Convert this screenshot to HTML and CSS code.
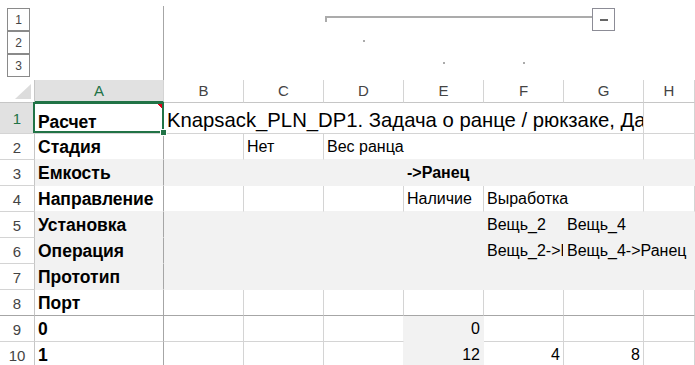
FILE: index.html
```html
<!DOCTYPE html>
<html lang="ru">
<head>
  <meta charset="UTF-8" />
  <title>Knapsack_PLN_DP1</title>
  <link rel="stylesheet" href="styles.css">
</head>
<body>

  <!-- уровни группировки столбцов -->
  <div class="outline">
    <div class="levels">
      <span class="lvl">1</span>
      <span class="lvl">2</span>
      <span class="lvl">3</span>
    </div>
    <div class="col-a-line"></div>
    <div class="group">
      <div class="group-bar"></div>
      <div class="collapse"></div>
    </div>
    <i class="dot dot-d"></i>
    <i class="dot dot-e"></i>
    <i class="dot dot-f"></i>
  </div>

  <div class="sheet">
    <!-- заголовки столбцов -->
    <div class="c corner"></div>
    <div class="c ch sel-col">A</div>
    <div class="c ch">B</div>
    <div class="c ch">C</div>
    <div class="c ch">D</div>
    <div class="c ch">E</div>
    <div class="c ch">F</div>
    <div class="c ch">G</div>
    <div class="c ch">H</div>

    <!-- 1 -->
    <div class="c rh sel-row">1</div>
    <div class="c r1 b a active">Расчет</div>
    <div class="c r1 title s6">Knapsack_PLN_DP1. Задача о ранце / рюкзаке, Данные</div>
    <div class="c r1"></div>

    <!-- 2 -->
    <div class="c rh">2</div>
    <div class="c b a to-fill">Стадия</div>
    <div class="c to-fill"></div>
    <div class="c to-fill">Нет</div>
    <div class="c s4 to-fill">Вес ранца</div>
    <div class="c to-fill"></div>

    <!-- 3 -->
    <div class="c rh">3</div>
    <div class="c b fill a">Емкость</div>
    <div class="c fill s3"></div>
    <div class="c fill s4 b">-&gt;Ранец</div>

    <!-- 4 -->
    <div class="c rh">4</div>
    <div class="c b a to-fill">Направление</div>
    <div class="c to-fill"></div>
    <div class="c to-fill"></div>
    <div class="c to-fill"></div>
    <div class="c to-fill">Наличие</div>
    <div class="c s2 to-fill">Выработка</div>
    <div class="c to-fill"></div>

    <!-- 5 -->
    <div class="c rh">5</div>
    <div class="c b fill a">Установка</div>
    <div class="c fill s4"></div>
    <div class="c fill">Вещь_2</div>
    <div class="c fill s2">Вещь_4</div>

    <!-- 6 -->
    <div class="c rh">6</div>
    <div class="c b fill a">Операция</div>
    <div class="c fill s4"></div>
    <div class="c fill">Вещь_2-&gt;Ранец</div>
    <div class="c fill s2">Вещь_4-&gt;Ранец</div>

    <!-- 7 -->
    <div class="c rh">7</div>
    <div class="c b fill a">Прототип</div>
    <div class="c fill s7"></div>

    <!-- 8 -->
    <div class="c rh frz">8</div>
    <div class="c b a frz">Порт</div>
    <div class="c frz"></div>
    <div class="c frz"></div>
    <div class="c frz"></div>
    <div class="c frz"></div>
    <div class="c frz"></div>
    <div class="c frz"></div>
    <div class="c frz"></div>

    <!-- 9 -->
    <div class="c rh">9</div>
    <div class="c b a">0</div>
    <div class="c"></div>
    <div class="c"></div>
    <div class="c nb-r"></div>
    <div class="c fill num">0</div>
    <div class="c"></div>
    <div class="c"></div>
    <div class="c"></div>

    <!-- 10 -->
    <div class="c rh">10</div>
    <div class="c b a">1</div>
    <div class="c"></div>
    <div class="c"></div>
    <div class="c nb-r"></div>
    <div class="c fill num">12</div>
    <div class="c num">4</div>
    <div class="c num">8</div>
    <div class="c"></div>
  </div>

</body>
</html>
```

FILE: styles.css
```css
body {
  margin: 0;
  font-family: 'Liberation Sans', Arial, sans-serif;
  background: #fff;
  color: #000;
  width: 695px;
  height: 365px;
  overflow: hidden;
}

/* группировка */
.outline {
  display: grid;
  grid-template-columns: 35px 129px repeat(6, 80px) 1fr;
  grid-template-rows: 8px 23px 23px 23px 3px;
  height: 80px;
}
.levels {
  grid-column: 1;
  grid-row: 2 / 6;
  display: flex;
  flex-direction: column;
  padding-left: 7px;
}
.lvl {
  width: 23px;
  height: 23px;
  box-sizing: border-box;
  border: 1px solid #8a8a8a;
  display: flex;
  align-items: center;
  justify-content: center;
  font-size: 12px;
  color: #444;
}
.col-a-line {
  grid-column: 2;
  grid-row: 1 / -1;
  margin-top: 6px;
  border-right: 1px solid #a6a6a6;
}
.group {
  grid-column: 5 / 9;
  grid-row: 2;
  display: flex;
  align-items: flex-start;
  padding-left: 1px;
  padding-right: 29px;
}
.group-bar {
  flex: 1;
  height: 4px;
  margin-top: 8px;
  border-top: 2px solid #ababab;
  border-left: 2px solid #ababab;
}
.collapse {
  width: 23px;
  height: 23px;
  box-sizing: border-box;
  border: 1px solid #8c8c96;
  display: flex;
  align-items: center;
  justify-content: center;
}
.collapse::before {
  content: "";
  width: 8px;
  height: 2px;
  background: #666;
}
.dot {
  width: 2px;
  height: 2px;
  background: #ababab;
  justify-self: center;
  align-self: start;
}
.dot-d { grid-column: 5; grid-row: 3; margin-top: 9px; }
.dot-e { grid-column: 6; grid-row: 4; margin-top: 8px; }
.dot-f { grid-column: 7; grid-row: 4; margin-top: 8px; }

/* лист */
.sheet {
  display: grid;
  grid-template-columns: 35px 129px repeat(6, 80px) 1fr;
  grid-template-rows: 23px 31px repeat(9, 26px);
}
.c {
  box-sizing: border-box;
  border-right: 1px solid #d4d4d4;
  border-bottom: 1px solid #d4d4d4;
  display: flex;
  align-items: flex-end;
  padding: 0 3px 2px;
  font-size: 16px;
  line-height: 20px;
  white-space: nowrap;
  overflow: hidden;
  position: relative;
}
.corner {
  border-bottom-color: #c6c6c6;
  border-right-color: #c6c6c6;
}
.corner::after {
  content: "";
  position: absolute;
  right: 3px;
  bottom: 3px;
  width: 16px;
  height: 15px;
  background: #dcdcdc;
  clip-path: polygon(100% 0, 100% 100%, 0 100%);
}
.ch, .rh {
  justify-content: center;
  align-items: center;
  padding: 0;
  font-size: 15px;
  color: #444;
}
.ch { border-bottom-color: #c6c6c6; }
.rh {
  border-right-color: #c6c6c6;
  padding-top: 2px;
}
.sel-col {
  background: #e1e1e1;
  color: #217346;
  border-bottom: 2px solid #217346;
}
.sel-row {
  background: #e1e1e1;
  color: #217346;
}
.r1 { padding-bottom: 1px; }
.title {
  font-size: 20.3px;
  line-height: 23px;
}
.b { font-weight: bold; }
.num { justify-content: flex-end; }
.s2 { grid-column: span 2; }
.s3 { grid-column: span 3; }
.s4 { grid-column: span 4; }
.s6 { grid-column: span 6; }
.s7 { grid-column: span 7; }
.fill {
  background: #f2f2f2;
  border-color: #f2f2f2;
}
.to-fill { border-bottom-color: #f2f2f2; }
.nb-r { border-right-color: #f2f2f2; }
.frz { border-bottom-color: #a6a6a6; }
.a {
  border-right-color: #a6a6a6;
  font-size: 17.5px;
}

/* выделенная ячейка A1 */
.active { overflow: visible; }
.active::before {
  content: "";
  position: absolute;
  top: -1px;
  right: -1px;
  bottom: 0;
  left: -2px;
  border: 2px solid #217346;
}
.active::after {
  content: "";
  position: absolute;
  right: -4px;
  bottom: -3px;
  width: 5px;
  height: 5px;
  background: #217346;
  border: 1px solid #fff;
  z-index: 2;
}
/* индикатор примечания */
.r1.a {
  background-image: linear-gradient(225deg, #e3001b 3px, transparent 3px);
  background-size: 7px 7px;
  background-position: right 1px top 1px;
  background-repeat: no-repeat;
}
```
